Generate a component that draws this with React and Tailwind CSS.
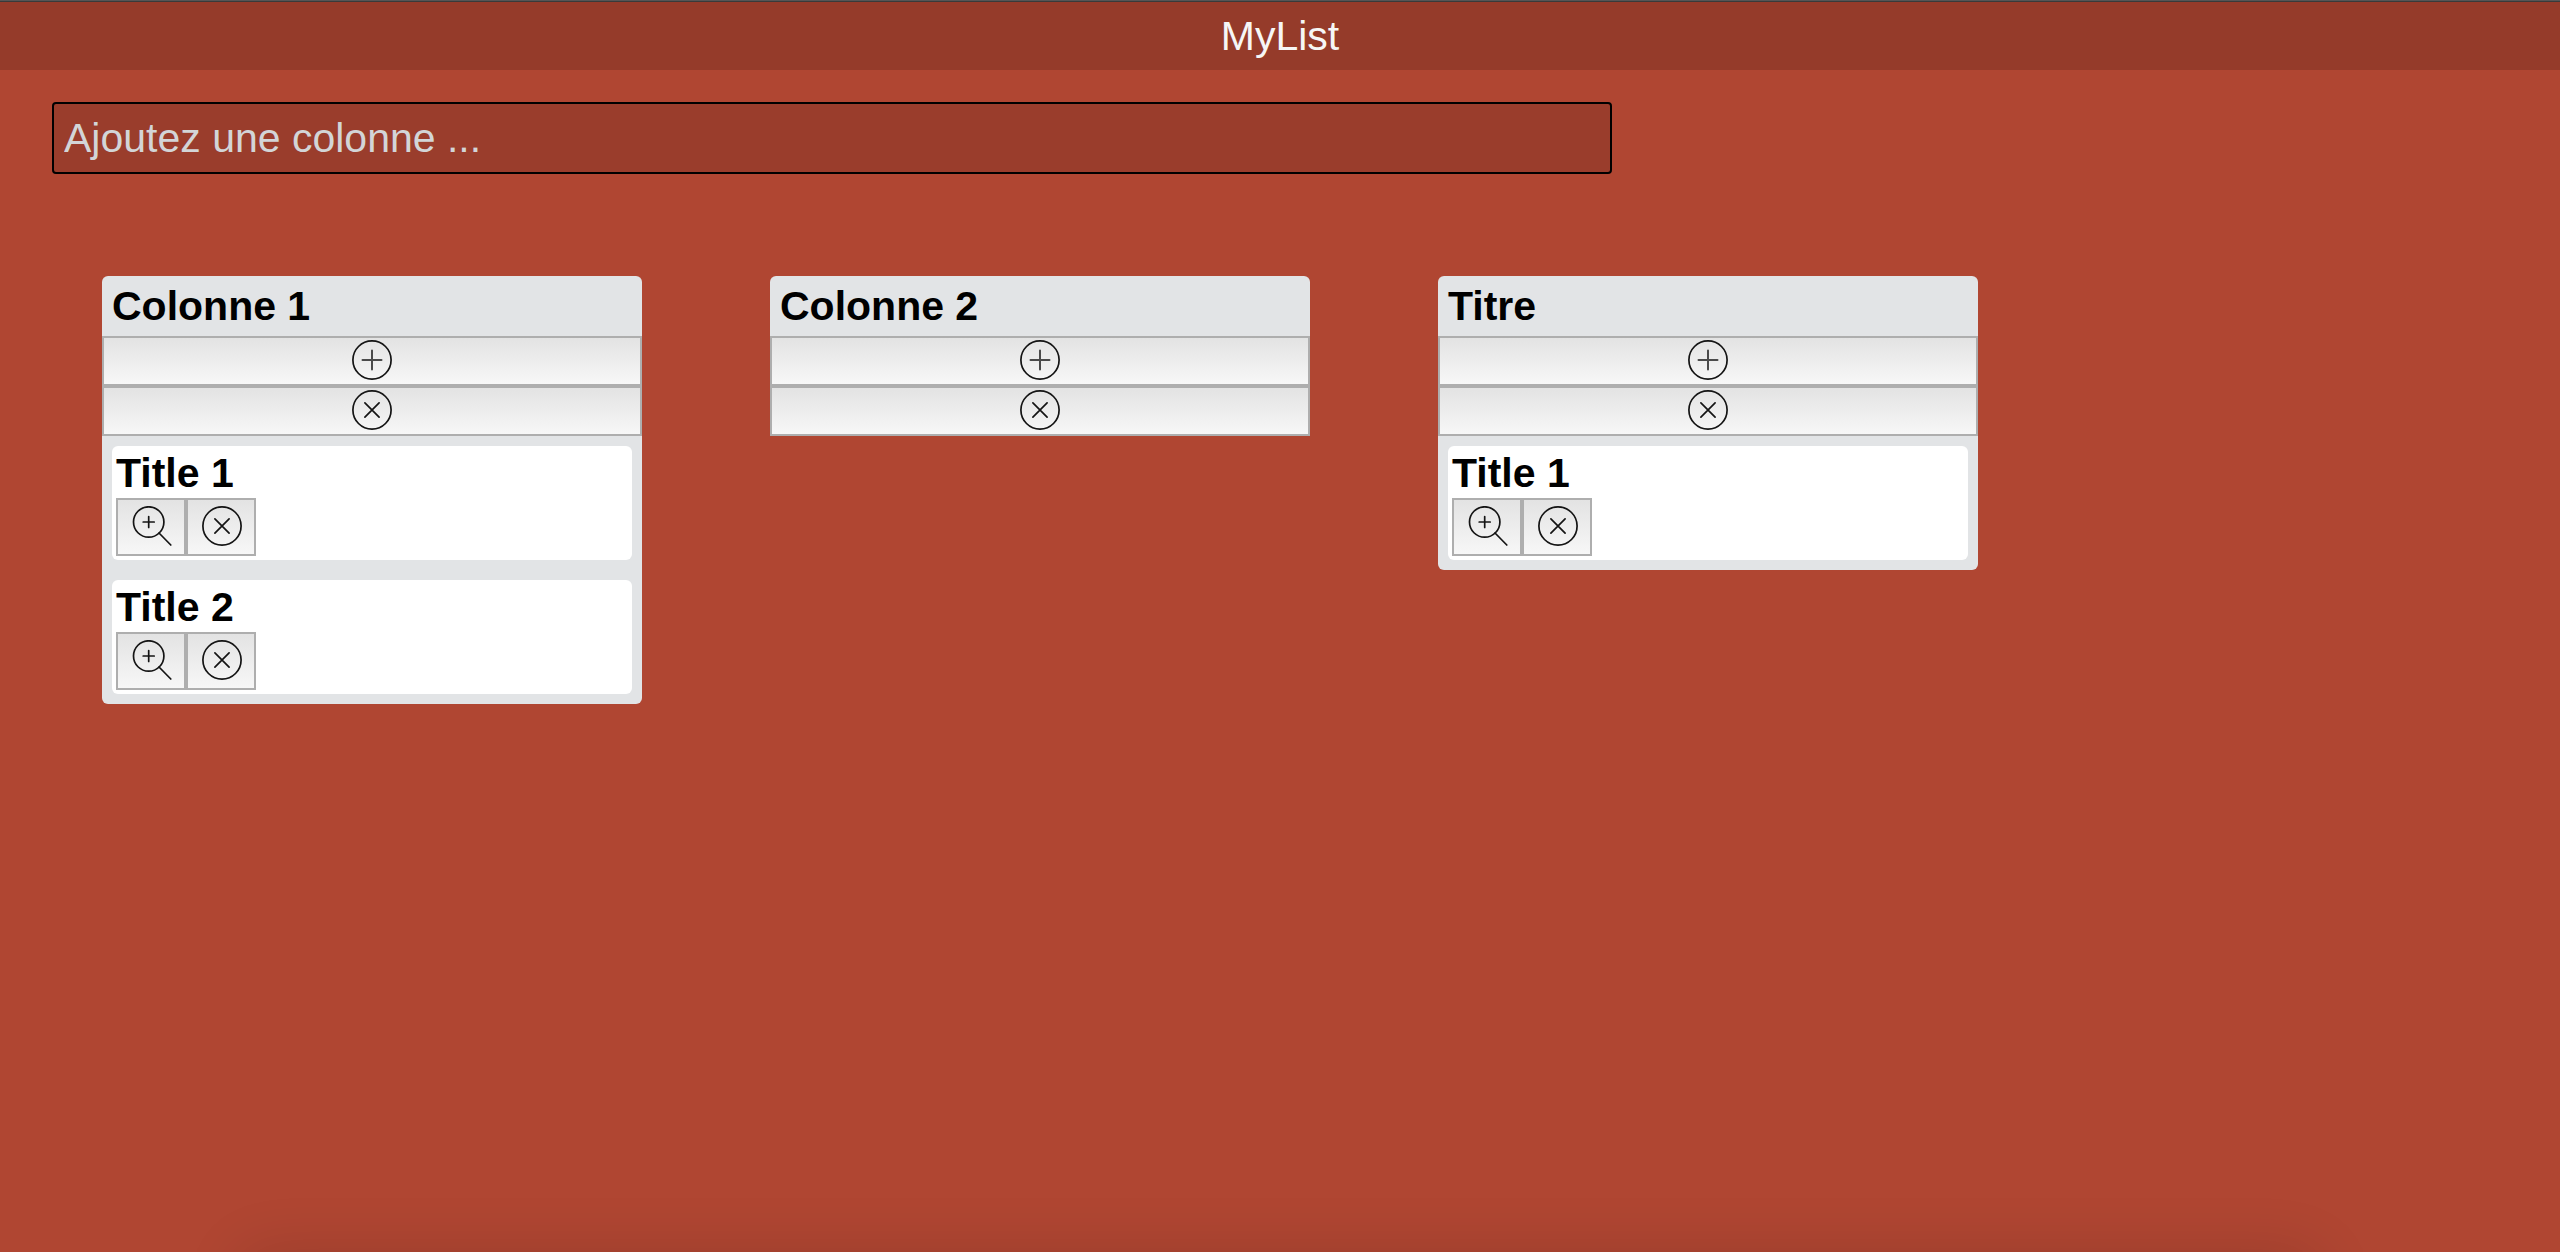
import React from "react";

const columns = [
  { title: "Colonne 1", cards: ["Title 1", "Title 2"] },
  { title: "Colonne 2", cards: [] },
  { title: "Titre", cards: ["Title 1"] },
];

function Icon({ children }) {
  return (
    <svg
      className="size-10 shrink-0"
      viewBox="0 0 40 40"
      fill="none"
      stroke="#141414"
      strokeWidth="1.7"
      strokeLinecap="round"
      aria-hidden="true"
    >
      {children}
    </svg>
  );
}

function PlusIcon() {
  return (
    <Icon>
      <circle cx="20" cy="20" r="19.1" />
      <path d="M10.5 20H29.5M20 10.5V29.5" stroke="#4a4a4a" strokeWidth="2" />
    </Icon>
  );
}

function CloseIcon() {
  return (
    <Icon>
      <circle cx="20" cy="20" r="19.1" />
      <path d="M12.9 12.9L27.1 27.1M27.1 12.9L12.9 27.1" />
    </Icon>
  );
}

function ZoomIcon() {
  return (
    <Icon>
      <circle cx="16.7" cy="16" r="15.2" />
      <path d="M11.2 16H22.2M16.7 10.5V21.5" />
      <path d="M27 27L38.8 39" />
    </Icon>
  );
}

function WideButton({ label, children }) {
  return (
    <button
      type="button"
      aria-label={label}
      className="flex w-full justify-center border-2 border-[#aeaeae] bg-linear-to-b from-[#e3e3e3] to-[#f7f7f7] pt-0.5 pb-1"
    >
      {children}
    </button>
  );
}

function SmallButton({ label, children }) {
  return (
    <button
      type="button"
      aria-label={label}
      className="flex justify-center border-2 border-[#aeaeae] bg-linear-to-b from-[#e3e3e3] to-[#f7f7f7] pt-1.5 pr-3 pb-2 pl-3.5"
    >
      {children}
    </button>
  );
}

function Card({ title }) {
  return (
    <article className="rounded-md bg-white px-1 pt-0.5 pb-1">
      <h3 className="text-[41px] leading-[50px] font-bold">{title}</h3>
      <div className="flex">
        <SmallButton label="Voir la carte">
          <ZoomIcon />
        </SmallButton>
        <SmallButton label="Supprimer la carte">
          <CloseIcon />
        </SmallButton>
      </div>
    </article>
  );
}

function Column({ title, cards }) {
  return (
    <section className="w-[540px] rounded-md bg-[#e2e4e6] text-black">
      <h2 className="px-2.5 text-[41px] leading-[60px] font-bold">{title}</h2>
      <WideButton label="Ajouter une carte">
        <PlusIcon />
      </WideButton>
      <WideButton label="Supprimer la colonne">
        <CloseIcon />
      </WideButton>
      {cards.length > 0 && (
        <div className="flex flex-col gap-5 p-2.5">
          {cards.map((card) => (
            <Card key={card} title={card} />
          ))}
        </div>
      )}
    </section>
  );
}

export default function App() {
  return (
    <div className="relative min-h-screen overflow-hidden bg-[#b04632] font-['Liberation_Sans',Arial,sans-serif]">
      <div className="h-0.5 border-b border-[#3a3a3a] bg-[#555555]" />
      <header className="bg-[#953b2a] text-center text-[41px] leading-[68px] text-[#f6f6f6]">
        <h1>MyList</h1>
      </header>
      <main className="px-[52px] pt-8">
        <input
          type="text"
          aria-label="Ajoutez une colonne"
          placeholder="Ajoutez une colonne ..."
          className="block h-[72px] w-full max-w-[1560px] rounded border-2 border-black bg-[#9a3d2c] px-2.5 text-[41px] text-white placeholder:text-[#d3d5d7] placeholder:opacity-100"
        />
        <div className="flex flex-wrap items-start gap-32 px-[50px] pt-[102px]">
          {columns.map((column) => (
            <Column key={column.title} {...column} />
          ))}
        </div>
      </main>
      <div className="pointer-events-none absolute inset-x-60 top-full h-20 rounded-3xl shadow-[0_0_60px_rgba(0,0,0,0.13)]" />
    </div>
  );
}
